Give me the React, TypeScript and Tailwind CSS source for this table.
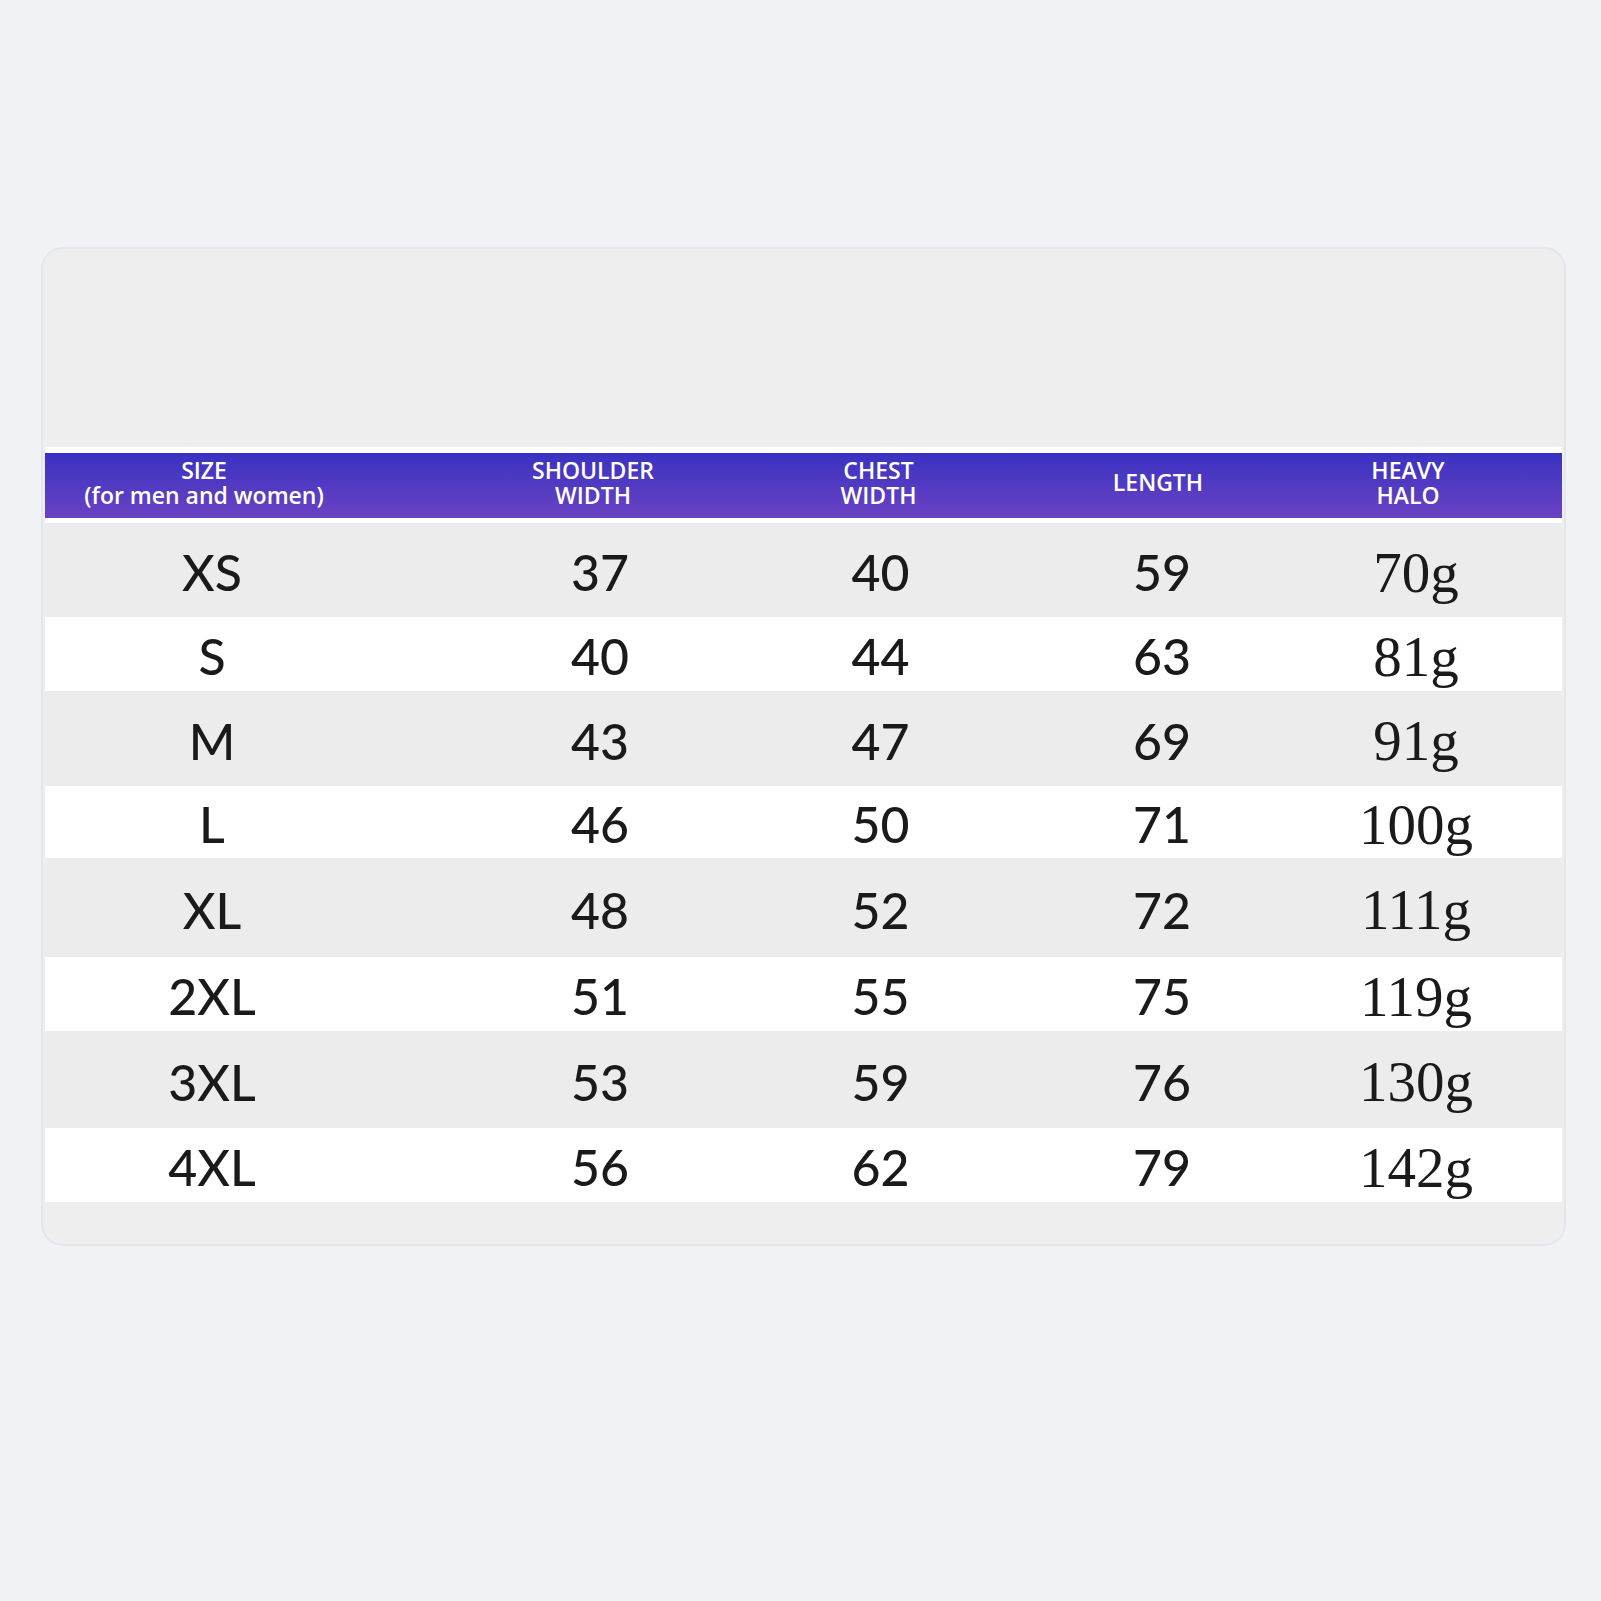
const rows = [
  { size: "XS", shoulder: "37", chest: "40", length: "59", heavy: "70g", h: "h-[94px]", bg: "bg-[#ececec]" },
  { size: "S", shoulder: "40", chest: "44", length: "63", heavy: "81g", h: "h-[74px]", bg: "bg-white" },
  { size: "M", shoulder: "43", chest: "47", length: "69", heavy: "91g", h: "h-[95px]", bg: "bg-[#ececec]" },
  { size: "L", shoulder: "46", chest: "50", length: "71", heavy: "100g", h: "h-[72px]", bg: "bg-white" },
  { size: "XL", shoulder: "48", chest: "52", length: "72", heavy: "111g", h: "h-[99px]", bg: "bg-[#ececec]" },
  { size: "2XL", shoulder: "51", chest: "55", length: "75", heavy: "119g", h: "h-[74px]", bg: "bg-white" },
  { size: "3XL", shoulder: "53", chest: "59", length: "76", heavy: "130g", h: "h-[97px]", bg: "bg-[#ececec]" },
  { size: "4XL", shoulder: "56", chest: "62", length: "79", heavy: "142g", h: "h-[74px]", bg: "bg-white" },
]

const cols = "grid grid-cols-[361px_334px_281px_268px_273px]"
const sans = { fontFamily: 'Lato, "Open Sans", sans-serif' }

function HeaderRow() {
  return (
    <div
      className={`${cols} h-[65px] items-center pb-[6px] bg-gradient-to-b from-[#3a31c2] to-[#6a41c2] text-white text-[23px] leading-[25px] font-semibold text-center`}
      style={{ fontFamily: '"Open Sans", "Liberation Sans", sans-serif' }}
    >
      <div className="pr-[43px]">
        SIZE
        <br />
        (for men and women)
      </div>
      <div className="pl-[40px]">
        SHOULDER
        <br />
        WIDTH
      </div>
      <div className="pr-[4px]">
        CHEST
        <br />
        WIDTH
      </div>
      <div className="pl-[6px]">LENGTH</div>
      <div className="pr-[35px]">
        HEAVY
        <br />
        HALO
      </div>
    </div>
  )
}

export default function App() {
  return (
    <div className="w-full h-[1601px] bg-[#f0f2f6] pt-[247px] pl-[41px]">
      <div className="w-[1525px] h-[999px] rounded-[22px] border-2 border-[#e3e6eb] bg-[#eeeeee] overflow-hidden">
        <div className="h-[198px]" />
        <div className="mx-[2px] bg-white pt-[6px] pb-[5px]">
          <HeaderRow />
        </div>
        <div className="mx-[2px] text-[#1a1a1a]">
          {rows.map((r) => (
            <div key={r.size} className={`${cols} ${r.h} ${r.bg} items-center pt-[4px] text-center`}>
              <div className="pr-[27px] text-[50px] leading-none font-medium" style={sans}>
                {r.size}
              </div>
              <div className="pl-[54px] text-[50px] leading-none font-medium" style={sans}>
                {r.shoulder}
              </div>
              <div className="text-[50px] leading-none font-medium" style={sans}>
                {r.chest}
              </div>
              <div className="pl-[14px] text-[50px] leading-none font-medium" style={sans}>
                {r.length}
              </div>
              <div
                className="pr-[19px] text-[57px] leading-none"
                style={{ fontFamily: '"Liberation Serif", serif' }}
              >
                {r.heavy}
              </div>
            </div>
          ))}
        </div>
      </div>
    </div>
  )
}
